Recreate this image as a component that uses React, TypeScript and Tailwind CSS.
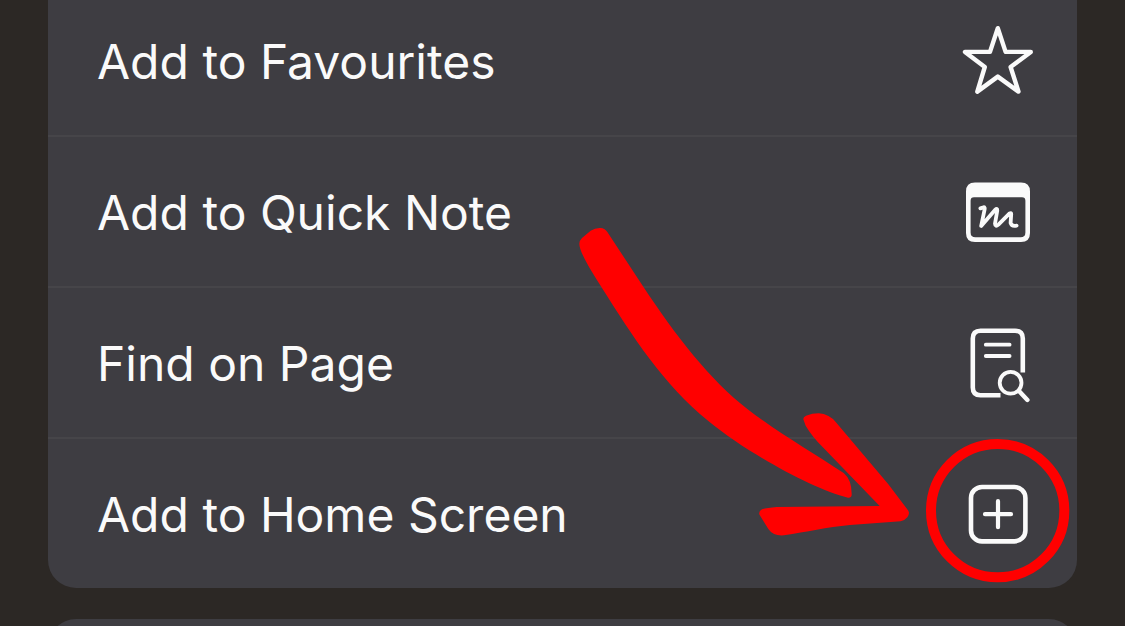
import type { ReactNode } from "react";

type Action = { label: string; icon: ReactNode };

function StarIcon() {
  return (
    <svg viewBox="0 0 72 72" className="size-18" fill="none" stroke="currentColor" strokeWidth="4.4" strokeLinejoin="round">
      <path d="M35.8 3.2 L43.6 26.9 H68.8 L48.6 42 L56.5 66.6 L35.8 51.6 L15.3 66.6 L22.8 42 L3 26.9 H28 Z" />
    </svg>
  );
}

function QuickNoteIcon() {
  return (
    <svg viewBox="0 0 72 72" className="size-18" fill="none" stroke="currentColor">
      <path
        d="M13 6.5 H59 Q68 6.5 68 15.5 V57 Q68 66 59 66 H13 Q4 66 4 57 V15.5 Q4 6.5 13 6.5 Z M12 21.3 Q8.6 21.3 8.6 24.7 V56.5 Q8.6 61.3 13.4 61.3 H58.6 Q63.4 61.3 63.4 56.5 V24.7 Q63.4 21.3 60 21.3 Z"
        fill="currentColor"
        fillRule="evenodd"
        stroke="none"
      />
      <path
        d="M18.4 32.4 L21.8 31.2 Q23 31.4 22.6 33.5 L19.2 50 L33 34 Q35.6 31.6 35.2 35 L33 47.6 Q33.2 51.4 36.4 48.6 L47.6 37.4 Q49.4 36.4 49.2 38.4 L48.6 47 Q49.6 50.6 54.6 49.6"
        strokeWidth="3.8"
        strokeLinecap="round"
        strokeLinejoin="round"
      />
    </svg>
  );
}

function FindIcon() {
  return (
    <svg viewBox="0 0 72 80" className="h-20 w-18" fill="none" stroke="currentColor" strokeWidth="4.6">
      <path d="M38.5 72.2 H18.5 Q10.8 72.2 10.8 64.5 V15.5 Q10.8 7.7 18.5 7.7 H53 Q60.8 7.7 60.8 15.5 V49.5" />
      <path d="M23.8 21.7 H47.6 M23.8 33 H47.6" strokeWidth="3.8" strokeLinecap="round" />
      <circle cx="48.6" cy="59.8" r="10.9" strokeWidth="3.8" />
      <path d="M57 68 L65.4 77" strokeWidth="4.4" strokeLinecap="round" />
    </svg>
  );
}

function AddIcon() {
  return (
    <svg viewBox="0 0 72 72" className="size-18" fill="none" stroke="currentColor" strokeLinecap="round">
      <rect x="9" y="9" width="54.4" height="54.4" rx="11" strokeWidth="4.6" />
      <path d="M36 23.2 V49.2 M23 36.2 H49" strokeWidth="4.2" />
    </svg>
  );
}

const ACTIONS: Action[] = [
  { label: "Add to Favourites", icon: <StarIcon /> },
  { label: "Add to Quick Note", icon: <QuickNoteIcon /> },
  { label: "Find on Page", icon: <FindIcon /> },
  { label: "Add to Home Screen", icon: <AddIcon /> },
];

// Hand-drawn arrow and ring that point out the last action.
function Callout() {
  return (
    <svg
      viewBox="51 39 1500 1095"
      className="pointer-events-none absolute right-0 bottom-0 w-[500px]"
      fill="#ff0000"
      aria-hidden="true"
    >
      <path d="M58 101 Q58 92 66 84 L92 62 Q106 53 122 54 Q133 54 142 66 L247 226 C350 382 450 510 562 597 C650 665 755 727 851 789 Q876 810 875 855 Q874 864 864 863 C760 838 560 728 445 633 C310 524 215 375 126 234 C105 200 58 130 58 101 Z" />
      <path d="M730 628 Q729 621 738 617 Q757 610 776 610 Q808 612 829 638 L985 823 L1045 902 Q1050 911 1042 922 Q1034 932 1022 934 L870 945 C800 951 740 966 672 976 Q640 979 625 957 L599 915 Q594 905 606 898 Q622 893 650 891 L959 888 L790 713 Q757 681 737 647 Z" />
      <circle cx="1313" cy="902" r="200" fill="none" stroke="#ff0000" strokeWidth="30" />
    </svg>
  );
}

export default function App() {
  return (
    <main className="h-screen overflow-hidden bg-[#2c2825] px-12 font-['Inter','Liberation_Sans',sans-serif] text-[#fafafa]">
      <div className="relative -mt-3.5 rounded-b-[28px] bg-[#3e3d42]">
        <ul className="divide-y-2 divide-[#464549]">
          {ACTIONS.map((action) => (
            <li key={action.label}>
              <button type="button" className="flex h-[149px] w-full items-center justify-between pr-[43px] pl-[49px] text-left">
                <span className="pt-0.5 text-5xl whitespace-nowrap">{action.label}</span>
                {action.icon}
              </button>
            </li>
          ))}
        </ul>
        <Callout />
      </div>
      <div className="mt-[31px] h-16 rounded-t-[28px] bg-[#3e3d42]" />
    </main>
  );
}
